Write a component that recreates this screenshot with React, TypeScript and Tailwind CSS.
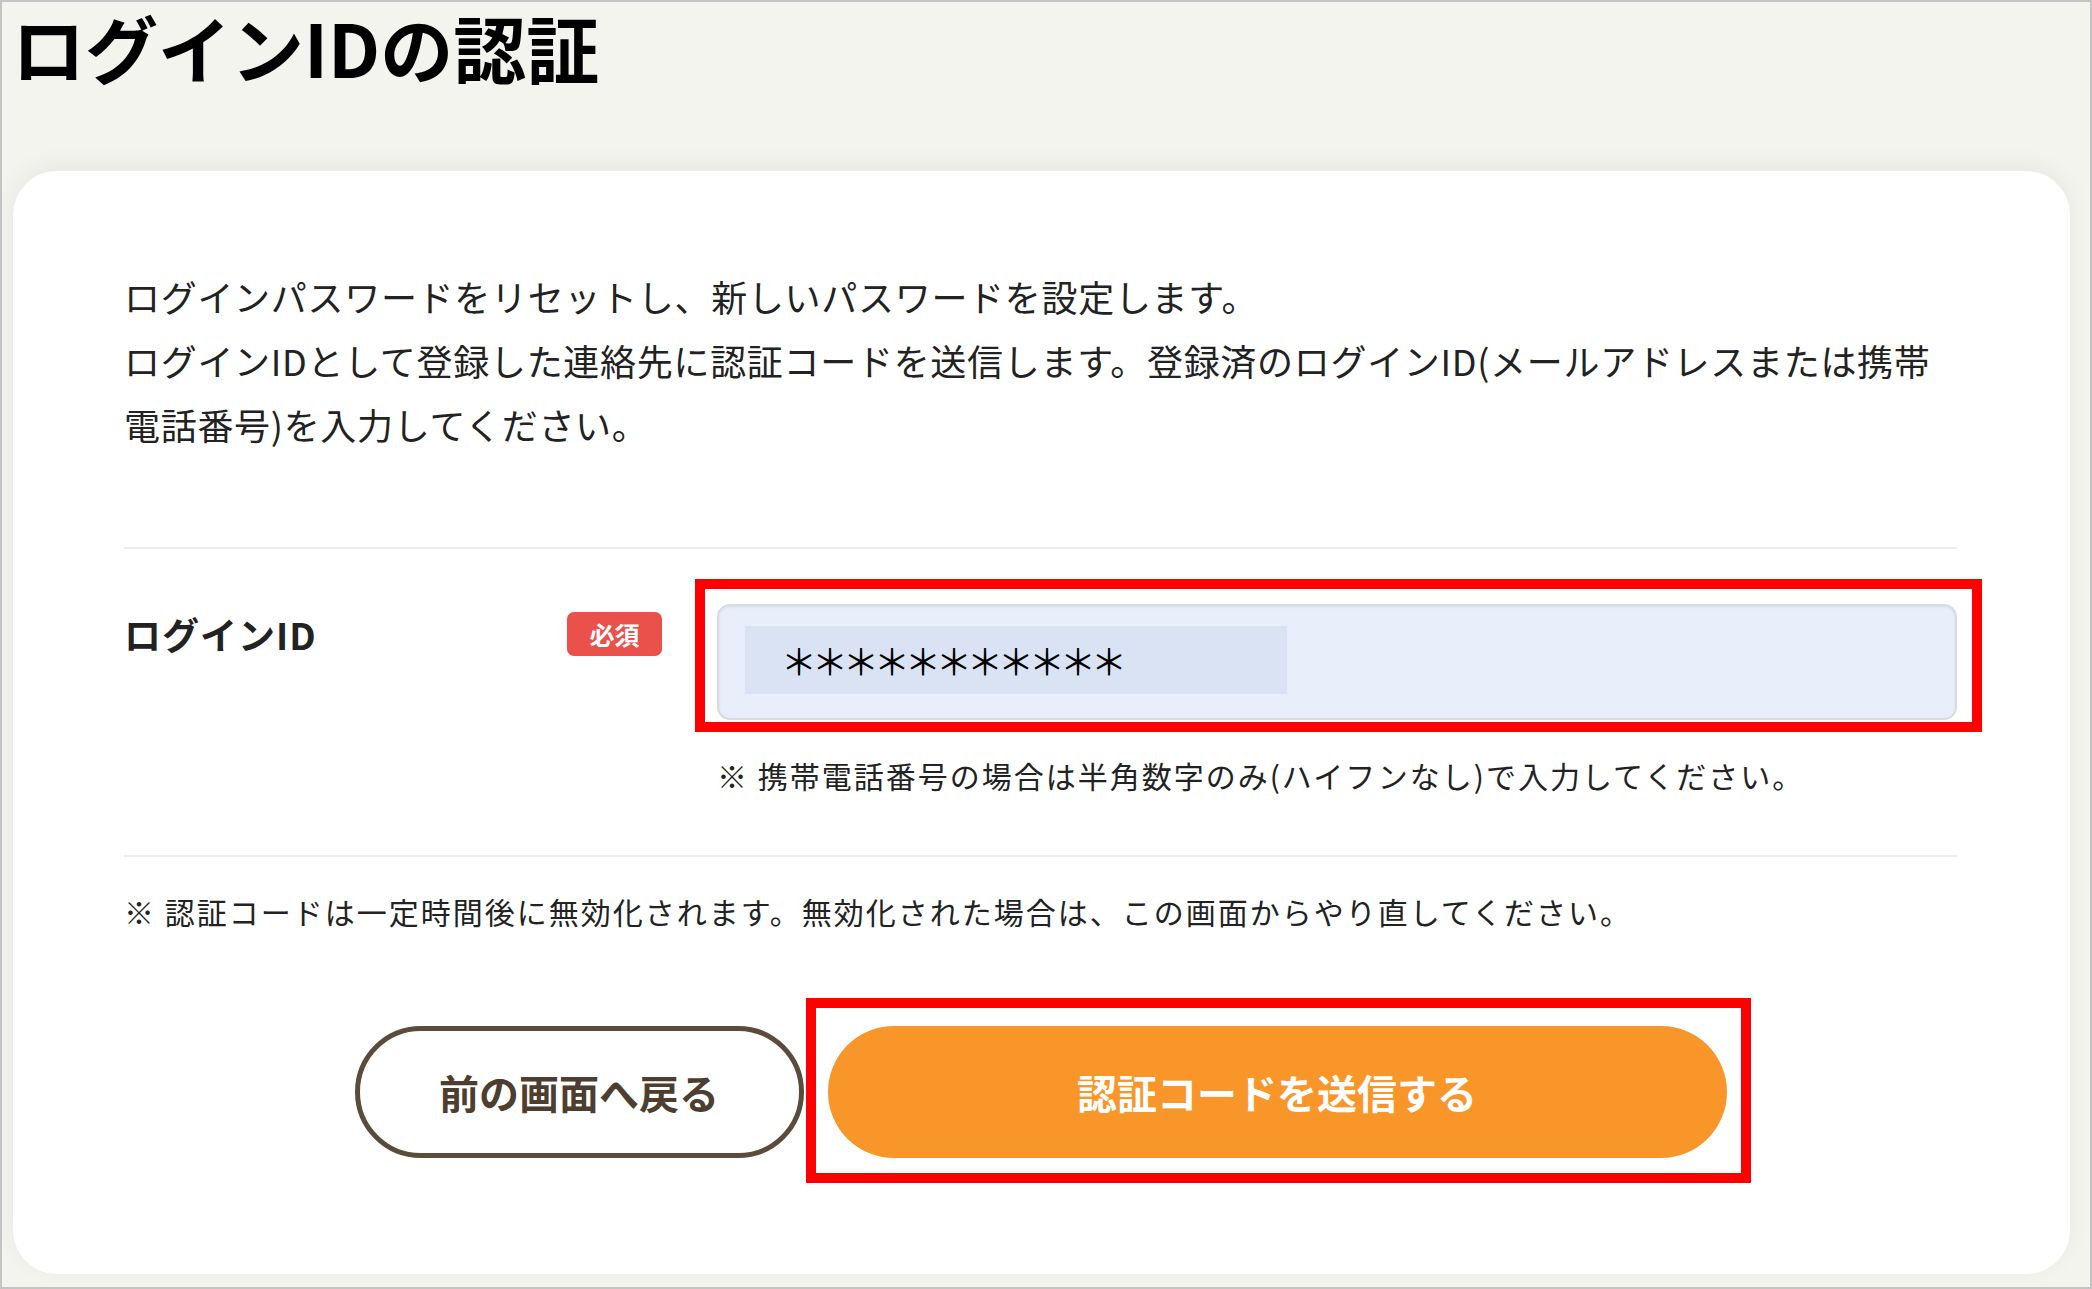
import type { JSX } from 'react'

const jp = "font-['Noto_Sans_CJK_JP','Noto_Sans',sans-serif]"

function RequiredBadge(): JSX.Element {
  return (
    <span className="flex h-[44px] w-[95px] items-center justify-center rounded-[7px] bg-[#ea514b] text-[25px] font-bold leading-none text-white">
      必須
    </span>
  )
}

export default function App(): JSX.Element {
  return (
    <div
      className={`${jp} flex h-[1289px] w-[2092px] flex-col overflow-hidden border-2 border-[#c4c4c4] bg-[#f4f4ef] text-[#222]`}
    >
      <h1 className="pl-[10px] pt-[2px] text-[73px] font-bold leading-[84px] text-black">
        ログインIDの認証
      </h1>

      <div className="ml-[11px] mt-[83px] h-[1103px] w-[2057px] rounded-[44px] bg-white pb-[116px] pl-[111px] pr-[113px] pt-[93px] shadow-[0_-6px_24px_rgba(0,0,0,0.05)]">
        <p className="text-[36px] leading-[64px] tracking-[0.7px]">
          ログインパスワードをリセットし、新しいパスワードを設定します。
          <br />
          ログインIDとして登録した連絡先に認証コードを送信します。登録済のログインID(メールアドレスまたは携帯
          <br />
          電話番号)を入力してください。
        </p>

        <div className="mt-[91px] h-[2px] bg-[#ececec]" />

        <div className="flex items-start gap-[55px] pb-[60px] pt-[55px]">
          <div className="mt-[8px] flex w-[538px] items-center justify-between">
            <span className="text-[37px] font-bold leading-[44px] tracking-[1px]">ログインID</span>
            <RequiredBadge />
          </div>

          <div className="flex flex-1 flex-col">
            <div className="relative">
              <div className="flex h-[116px] items-start rounded-[13px] border-2 border-[#d9dbdf] bg-[#e8effb] pl-[26px] pt-[20px] shadow-[inset_0_1px_3px_rgba(0,0,0,0.08)]">
                <div className="flex h-[68px] w-[542px] items-center bg-[#d9e3f3] pl-[36px] text-[36px] leading-none tracking-[-5px] text-black">
                  ＊＊＊＊＊＊＊＊＊＊＊
                </div>
              </div>
              <div className="pointer-events-none absolute -bottom-[12px] -left-[22px] -right-[25px] -top-[25px] border-[10px] border-[#ff0000]" />
            </div>
            <p className="mt-[35px] text-[30px] leading-[40px] tracking-[2px]">
              ※ 携帯電話番号の場合は半角数字のみ(ハイフンなし)で入力してください。
            </p>
          </div>
        </div>

        <div className="h-[2px] bg-[#ececec]" />

        <p className="mt-[34px] text-[30px] leading-[40px] tracking-[2px]">
          ※ 認証コードは一定時間後に無効化されます。無効化された場合は、この画面からやり直してください。
        </p>

        <div className="mt-[95px] flex justify-center gap-[24px]">
          <button
            type="button"
            className="flex h-[132px] w-[449px] items-center justify-center rounded-full border-[5px] border-[#5b4b3a] bg-white text-[40px] font-bold text-[#4d3e2f]"
          >
            前の画面へ戻る
          </button>
          <div className="relative">
            <button
              type="button"
              className="flex h-[132px] w-[899px] items-center justify-center rounded-full bg-[#f8962a] text-[40px] font-bold text-white"
            >
              認証コードを送信する
            </button>
            <div className="pointer-events-none absolute -bottom-[25px] -left-[22px] -right-[24px] -top-[28px] border-[10px] border-[#ff0000]" />
          </div>
        </div>
      </div>
    </div>
  )
}
